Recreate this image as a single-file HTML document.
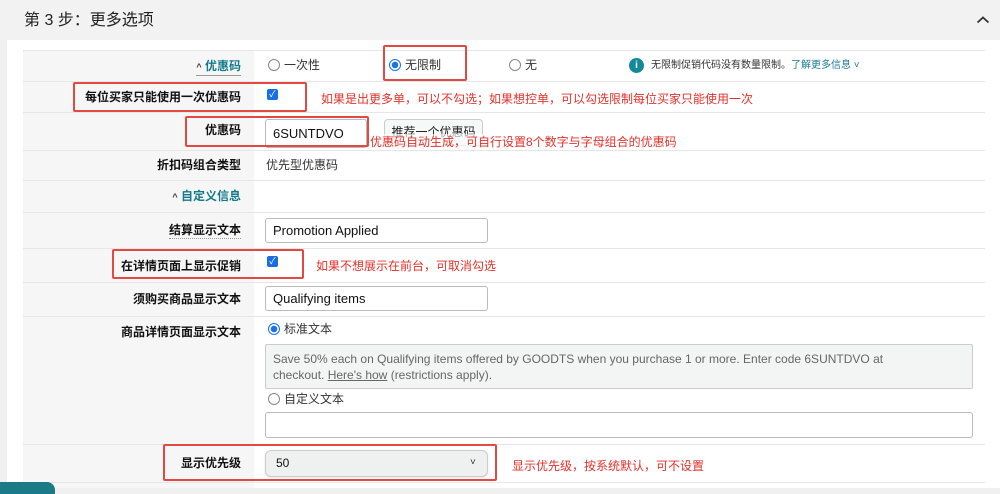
<!DOCTYPE html>
<html><head><meta charset="utf-8"><style>
*{margin:0;padding:0;box-sizing:border-box}
body{width:1000px;height:488px;overflow:hidden;background:#f0f0f0;font-family:"Liberation Sans","Noto Sans CJK SC",sans-serif;color:#111;position:relative;font-size:12px}
.a{position:absolute;white-space:nowrap}
.hdr{left:0;top:0;width:1000px;height:40px;background:#f2f2f2}
.panel{left:7px;top:40px;width:993px;height:448px;background:#fff}
.lab{left:23px;top:50px;width:231px;height:438px;background:#f6f6f6}
.line{left:23px;width:962px;height:1px;background:#e6e6e6}
.l{right:759px;font-weight:bold;font-size:12px;line-height:16px}
.red{color:#e3322b;font-size:12px;line-height:16px}
.box{border:2px solid #e04a43;border-radius:2px}
.rad{width:12px;height:12px;border:1px solid #888;border-radius:50%;background:#fff}
.rad.on{border:1px solid #1a73e8;background:radial-gradient(circle,#1a73e8 0 3px,#fff 3.5px)}
.cb{width:11px;height:11px;background:#1a6fe0;border-radius:2px;color:#fff;font-size:9px;line-height:11px;text-align:center}
.inp{border:1px solid #bbb;border-radius:3px;background:#fff;padding-left:7px;font-size:13px;color:#111}
.t{font-size:12px;line-height:16px}
</style></head><body>
<div class="a hdr"></div>
<div class="a" style="left:24px;top:10px;font-size:16px;line-height:22px;color:#222">第 3 步：更多选项</div>
<svg class="a" style="left:976px;top:15px" width="14" height="9"><path d="M1.5 7.5L7 2.5L12.5 7.5" stroke="#333" stroke-width="1.8" fill="none"/></svg>
<div class="a panel"></div>
<div class="a lab"></div>
<div class="a line" style="top:50px"></div>
<div class="a line" style="top:81px"></div>
<div class="a line" style="top:112px"></div>
<div class="a line" style="top:150px"></div>
<div class="a line" style="top:180px"></div>
<div class="a line" style="top:212px"></div>
<div class="a line" style="top:248px"></div>
<div class="a line" style="top:282px"></div>
<div class="a line" style="top:316px"></div>
<div class="a line" style="top:444px"></div>
<div class="a line" style="top:482px"></div>

<div class="a l" style="top:58px;color:#127a8a;border-bottom:1px solid #999"><span style="font-size:9px;color:#333">^</span> 优惠码</div>
<div class="a rad" style="left:268px;top:59px"></div><div class="a t" style="left:284px;top:57px;color:#333">一次性</div>
<div class="a rad on" style="left:389px;top:59px"></div><div class="a t" style="left:405px;top:57px;color:#333">无限制</div>
<div class="a rad" style="left:509px;top:59px"></div><div class="a t" style="left:525px;top:57px;color:#333">无</div>
<div class="a" style="left:629px;top:58px;width:15px;height:15px;border-radius:50%;background:#138a9a;color:#fff;font-size:10px;font-weight:bold;text-align:center;line-height:15px">i</div>
<div class="a" style="left:651px;top:59px;font-size:10px;line-height:14px;color:#333">无限制促销代码没有数量限制。<span style="color:#1f7a9a">了解更多信息 ˅</span></div>
<div class="a box" style="left:383px;top:45px;width:84px;height:36px"></div>

<div class="a l" style="top:89px">每位买家只能使用一次优惠码</div>
<div class="a cb" style="left:267px;top:89px">✓</div>
<div class="a red" style="left:321px;top:91px">如果是出更多单，可以不勾选；如果想控单，可以勾选限制每位买家只能使用一次</div>
<div class="a box" style="left:73px;top:82px;width:234px;height:30px"></div>

<div class="a l" style="top:122px">优惠码</div>
<div class="a inp" style="left:265px;top:119px;width:102px;height:29px;line-height:27px">6SUNTDVO</div>
<div class="a" style="left:384px;top:119px;width:99px;height:27px;border:1px solid #ccc;border-radius:4px;background:#f7f8f8;text-align:center;line-height:25px;font-size:12px;color:#222">推荐一个优惠码</div>
<div class="a red" style="left:370px;top:134px;background:rgba(255,255,255,.6)">优惠码自动生成，可自行设置8个数字与字母组合的优惠码</div>
<div class="a box" style="left:185px;top:116px;width:184px;height:31px"></div>

<div class="a l" style="top:157px">折扣码组合类型</div>
<div class="a t" style="left:266px;top:157px;color:#333">优先型优惠码</div>
<div class="a l" style="top:188px;color:#127a8a"><span style="font-size:9px;color:#333">^</span> 自定义信息</div>
<div class="a l" style="top:222px;border-bottom:1px dotted #999">结算显示文本</div>
<div class="a inp" style="left:265px;top:218px;width:223px;height:25px;line-height:23px">Promotion Applied</div>
<div class="a l" style="top:258px">在详情页面上显示促销</div>
<div class="a cb" style="left:267px;top:256px">✓</div>
<div class="a red" style="left:316px;top:258px">如果不想展示在前台，可取消勾选</div>
<div class="a box" style="left:112px;top:249px;width:192px;height:30px"></div>
<div class="a l" style="top:291px">须购买商品显示文本</div>
<div class="a inp" style="left:265px;top:286px;width:223px;height:25px;line-height:23px">Qualifying items</div>
<div class="a l" style="top:324px">商品详情页面显示文本</div>
<div class="a rad on" style="left:268px;top:323px"></div><div class="a t" style="left:284px;top:321px;color:#333">标准文本</div>
<div class="a" style="left:265px;top:344px;width:708px;height:45px;border:1px solid #ccc;border-radius:2px;background:#f3f5f5;padding:6px 60px 6px 7px;font-size:12px;line-height:16px;color:#666;white-space:normal">Save 50% each on Qualifying items offered by GOODTS when you purchase 1 or more. Enter code 6SUNTDVO at checkout. <u>Here's how</u> (restrictions apply).</div>
<div class="a rad" style="left:268px;top:393px"></div><div class="a t" style="left:284px;top:391px;color:#333">自定义文本</div>
<div class="a inp" style="left:265px;top:412px;width:708px;height:26px"></div>
<div class="a l" style="top:455px">显示优先级</div>
<div class="a" style="left:265px;top:450px;width:223px;height:27px;border:1px solid #ccc;border-radius:6px;background:#eff1f1;padding-left:10px;line-height:25px;font-size:12px;box-shadow:0 1px 2px rgba(0,0,0,.1)">50</div>
<div class="a" style="left:470px;top:457px;font-size:10px;color:#333">˅</div>
<div class="a red" style="left:512px;top:458px">显示优先级，按系统默认，可不设置</div>
<div class="a box" style="left:163px;top:444px;width:334px;height:37px"></div>
<div class="a" style="left:0;top:482px;width:55px;height:12px;background:#1a7a85;border-radius:0 8px 0 0"></div>
</body></html>
